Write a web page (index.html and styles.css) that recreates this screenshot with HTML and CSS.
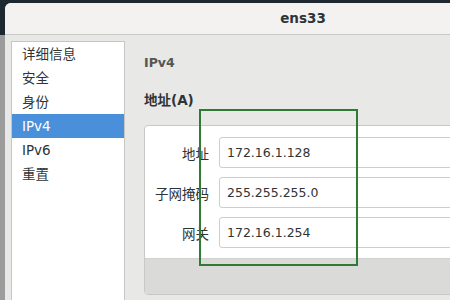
FILE: index.html
```html
<!DOCTYPE html>
<html lang="zh-CN">
<head>
  <meta charset="UTF-8" />
  <title>ens33</title>
  <link rel="stylesheet" href="styles.css">
</head>
<body>
  <div class="window">
    <div class="titlebar">ens33</div>
    <div class="main">
      <ul class="sidebar">
        <li>详细信息</li>
        <li>安全</li>
        <li>身份</li>
        <li class="active">IPv4</li>
        <li>IPv6</li>
        <li>重置</li>
      </ul>
      <div class="content">
        <div class="page-title">IPv4</div>
        <div class="section-title">地址(A)</div>
        <div class="panel">
          <div class="rows">
            <label>地址</label>
            <div class="field">172.16.1.128</div>
            <label>子网掩码</label>
            <div class="field">255.255.255.0</div>
            <label>网关</label>
            <div class="field">172.16.1.254</div>
          </div>
          <div class="panel-foot"></div>
        </div>
      </div>
    </div>
  </div>
  <div class="mark"></div>
</body>
</html>
```

FILE: styles.css
```css
html, body {
  margin: 0;
  height: 300px;
  overflow: hidden;
}
body {
  font-family: "DejaVu Sans", "Noto Sans CJK SC", sans-serif;
  color: #2e3436;
  background: linear-gradient(to bottom, #1d2830 35px, #9c9c9c 35px);
  padding: 3px 0 0 5px;
  position: relative;
}
.window {
  width: 596px;
  height: 297px;
  background: #e8e8e7;
  border-top-left-radius: 6px;
  overflow: hidden;
}
.titlebar {
  height: 31px;
  line-height: 31px;
  text-align: center;
  font-size: 13.5px;
  font-weight: bold;
  background: #f3f2f1;
  border-bottom: 1px solid #c9c9c7;
}
.main {
  display: flex;
  padding: 6px 0 0 6px;
  height: 260px;
}
.sidebar {
  list-style: none;
  margin: 0;
  padding: 0;
  width: 112px;
  background: #fff;
  border: 1px solid #c6c6c4;
  border-bottom: none;
  font-size: 13.5px;
}
.sidebar li {
  height: 24px;
  line-height: 24px;
  padding-left: 10px;
}
.sidebar li.active {
  background: #4a8fd9;
  color: #fff;
}
.content {
  flex: 1;
  margin-left: 19px;
}
.page-title {
  font-size: 12.5px;
  font-weight: bold;
  color: #555753;
  margin-top: 13px;
  line-height: 18px;
}
.section-title {
  font-size: 13.5px;
  font-weight: bold;
  margin-top: 18px;
  line-height: 20px;
}
.panel {
  margin-top: 15px;
  background: #fff;
  border: 1px solid #c8c8c6;
  border-radius: 4px;
  overflow: hidden;
}
.rows {
  display: grid;
  grid-template-columns: 64px 1fr;
  column-gap: 10px;
  row-gap: 9px;
  align-items: center;
  padding: 11px 0 10px 0;
}
.rows label {
  text-align: right;
  font-size: 13.5px;
  font-family: "Noto Sans CJK SC", sans-serif;
}
.field {
  height: 29px;
  line-height: 29px;
  border: 1px solid #cdcdcb;
  border-radius: 3px;
  padding-left: 7px;
  font-size: 12.5px;
  color: #333;
  background: #fff;
}
.panel-foot {
  height: 35px;
  background: #dadad8;
  border-top: 1px solid #d0d0ce;
}
.mark {
  position: absolute;
  left: 199px;
  top: 109px;
  width: 155px;
  height: 153px;
  border: 2px solid #2f7a34;
}
```
